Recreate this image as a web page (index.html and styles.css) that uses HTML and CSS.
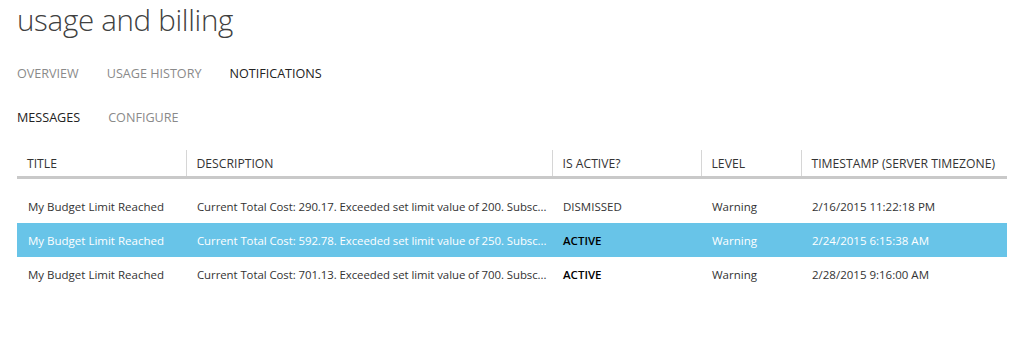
FILE: index.html
```html
<!DOCTYPE html>
<html>
<head>
<meta charset="utf-8">
<link rel="stylesheet" href="styles.css">
</head>
<body>
<div class="page">
  <h1 class="title">usage and billing</h1>
  <nav class="tabs main-tabs">
    <span class="tab">OVERVIEW</span>
    <span class="tab">USAGE HISTORY</span>
    <span class="tab active">NOTIFICATIONS</span>
  </nav>
  <nav class="tabs sub-tabs">
    <span class="tab active">MESSAGES</span>
    <span class="tab">CONFIGURE</span>
  </nav>
  <table class="grid">
    <colgroup>
      <col class="c-title">
      <col class="c-desc">
      <col class="c-active">
      <col class="c-level">
      <col class="c-time">
    </colgroup>
    <thead>
      <tr>
        <th>TITLE</th>
        <th>DESCRIPTION</th>
        <th>IS ACTIVE?</th>
        <th>LEVEL</th>
        <th>TIMESTAMP (SERVER TIMEZONE)</th>
      </tr>
    </thead>
    <tbody>
      <tr class="spacer"><td colspan="5"></td></tr>
      <tr>
        <td>My Budget Limit Reached</td>
        <td class="desc">Current Total Cost: 290.17. Exceeded set limit value of 200. Subsc...</td>
        <td class="state">DISMISSED</td>
        <td>Warning</td>
        <td>2/16/2015 11:22:18 PM</td>
      </tr>
      <tr class="selected">
        <td>My Budget Limit Reached</td>
        <td class="desc">Current Total Cost: 592.78. Exceeded set limit value of 250. Subsc...</td>
        <td class="state on">ACTIVE</td>
        <td>Warning</td>
        <td>2/24/2015 6:15:38 AM</td>
      </tr>
      <tr>
        <td>My Budget Limit Reached</td>
        <td class="desc">Current Total Cost: 701.13. Exceeded set limit value of 700. Subsc...</td>
        <td class="state on">ACTIVE</td>
        <td>Warning</td>
        <td>2/28/2015 9:16:00 AM</td>
      </tr>
    </tbody>
  </table>
</div>
</body>
</html>
```
FILE: styles.css
```css
html, body {
  margin: 0;
  padding: 0;
  background: #ffffff;
}
body {
  font-family: "Open Sans", "Noto Sans", "Liberation Sans", sans-serif;
  color: #333333;
}
.page {
  padding: 0 17px;
}
.title {
  margin: 0;
  padding-top: 2px;
  font-weight: 300;
  font-size: 29.5px;
  line-height: 36px;
  color: #404040;
  letter-spacing: -0.3px;
}
.tabs {
  display: flex;
  gap: 28px;
  font-size: 12.6px;
  line-height: 20px;
  color: #8a8a8a;
}
.main-tabs {
  margin-top: 26px;
}
.sub-tabs {
  margin-top: 24px;
}
.tab.active {
  color: #222222;
}
.grid {
  margin-top: 22px;
  width: 990px;
  table-layout: fixed;
  border-collapse: collapse;
  font-size: 11.5px;
}
.c-title { width: 169px; }
.c-desc { width: 366px; }
.c-active { width: 149px; }
.c-level { width: 100px; }
.c-time { width: 206px; }
.grid th {
  height: 26px;
  padding: 0 0 0 10px;
  text-align: left;
  font-weight: 400;
  font-size: 12.2px;
  color: #333333;
  border-bottom: 3px solid #c9c9c9;
  white-space: nowrap;
}
.grid th + th {
  border-left: 1px solid #d6d6d6;
}
.grid td {
  height: 34px;
  padding: 0 0 0 11px;
  white-space: nowrap;
  color: #333333;
}
.grid td.desc {
  font-size: 11.4px;
  letter-spacing: -0.06px;
}
.grid tr.spacer td {
  height: 10px;
  padding: 0;
}
.grid td.state.on {
  font-weight: 600;
  color: #000000;
}
.grid tr.selected td {
  background: #68c4e8;
  color: #ffffff;
}
.grid tr.selected td.state.on {
  color: #000000;
}
```
